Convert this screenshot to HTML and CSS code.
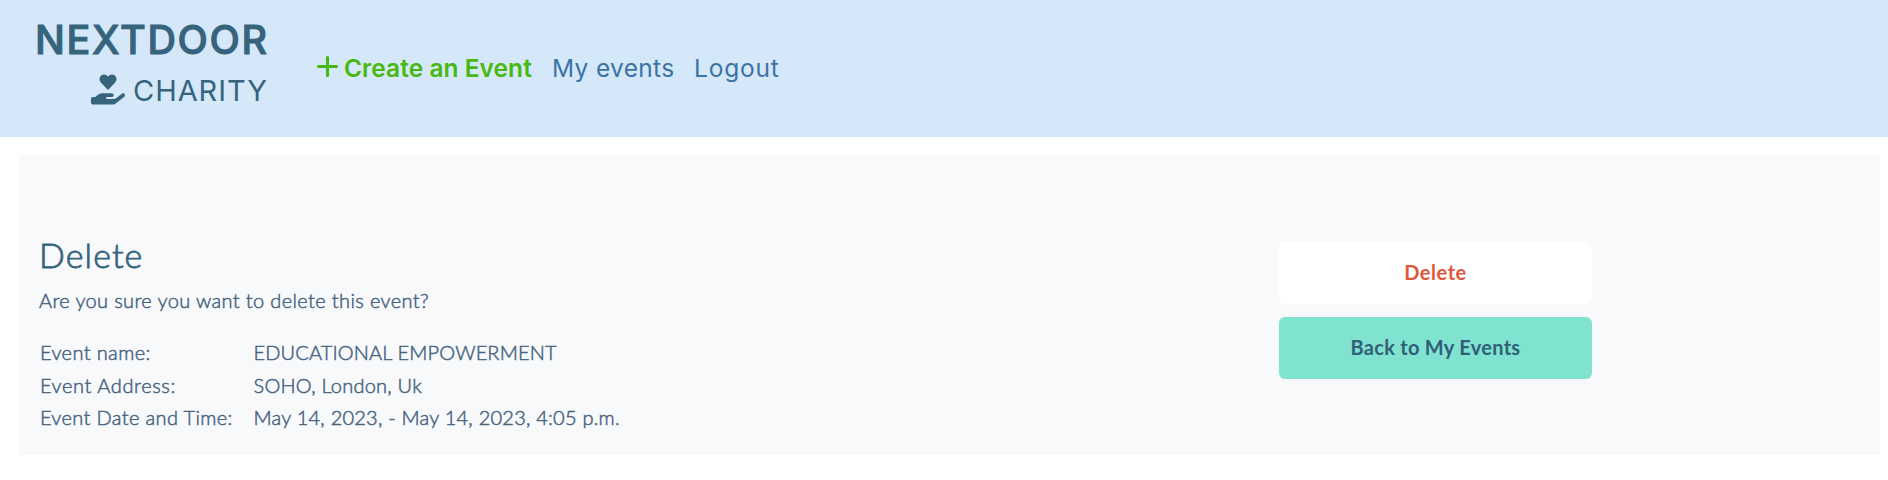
FILE: index.html
```html
<!DOCTYPE html>
<html lang="en">
<head>
<meta charset="utf-8">
<title>Nextdoor Charity</title>
<link rel="stylesheet" href="styles.css">
</head>
<body>
<header class="header">
  <a class="brand">
    <span class="brand-name">NEXTDOOR</span>
    <span class="brand-sub">
      <svg class="brand-icon" viewBox="0 0 576 512"><path d="M275.200 250.500c7 7.400 18.400 7.400 25.500 0l108.900-114.200c31.600-33.200 29.800-88.200-5.600-118.800-30.800-26.700-76.700-21.900-104.900 7.700L288 36.900l-11.100-11.600C248.700-4.400 202.800-9.200 172 17.500c-35.300 30.600-37.200 85.600-5.600 118.800l108.800 114.200z"/><path d="M565.200 328.100c-11.800-10.700-30.200-10-42.600 0L430.300 402c-11.300 9.100-25.400 14-40 14H272c-8.800 0-16-7.200-16-16s7.200-16 16-16h78.300c15.900 0 30.700-10.900 33.300-26.600 3.300-20-12.100-37.400-31.600-37.400H192c-27 0-53.100 9.300-74.100 26.300L71.400 384H32c-18 0-32 14-32 32v64c0 18 14 32 32 32h340.800c14.500 0 28.600-4.900 40-14L564 377c15.200-12.100 16.400-35.300 1.200-48.900z"/></svg>
      <span class="brand-charity">CHARITY</span>
    </span>
  </a>
  <nav class="nav">
    <a class="nav-create"><svg class="plus" viewBox="0 0 20 20"><path d="M10 1.500V18.500M1.500 10H18.500"/></svg><span>Create an Event</span></a>
    <a class="nav-events">My events</a>
    <a class="nav-logout">Logout</a>
  </nav>
</header>
<main class="panel">
  <section class="details">
    <h1 class="title">Delete</h1>
    <p class="question">Are you sure you want to delete this event?</p>
    <div class="facts">
      <span class="l1">Event name:</span><span class="v1">EDUCATIONAL EMPOWERMENT</span>
      <span class="l2">Event Address:</span><span class="v2">SOHO, London, Uk</span>
      <span class="l3">Event Date and Time:</span><span class="v3">May 14, 2023, - May 14, 2023, 4:05 p.m.</span>
    </div>
  </section>
  <section class="actions">
    <button class="btn btn-delete">Delete</button>
    <button class="btn btn-back">Back to My Events</button>
  </section>
</main>
</body>
</html>
```
FILE: styles.css
```css
* { box-sizing: border-box; }
body { margin: 0; background: #fff; color: #476482; font-family: Lato, sans-serif; }
.header { display: flex; height: 137px; background: #d5e8f9; padding-left: 35px; }
.brand { width: 233px; padding-top: 15px; color: #36647c; display: flex; flex-direction: column; }
.brand-name { font: 500 39.5px/50px Inter, sans-serif; letter-spacing: 1.7px; white-space: nowrap; -webkit-text-stroke: 1px #36647c; stroke-linejoin: round; }
.brand-sub { display: flex; padding-left: 56px; padding-top: 9px; }
.brand-icon { width: 34px; height: 31px; fill: #36647c; }
.brand-charity { font: 400 29px/34px Inter, sans-serif; letter-spacing: 0.95px; margin-left: 8px; }
.nav { display: flex; padding-top: 51px; font: 400 24.5px/34px Inter, sans-serif; color: #3c73a5; white-space: nowrap; }
.nav-create { display: flex; width: 235px; margin-left: 49px; color: #47b811; font-weight: 600; letter-spacing: 0.04px; }
.plus { width: 21px; height: 21px; margin: 5px 6px 0 0; fill: none; stroke: #47b811; stroke-width: 3; stroke-linecap: round; }
.nav-events { width: 142px; letter-spacing: 0.33px; }
.nav-logout { letter-spacing: 0.8px; }
.panel { display: flex; justify-content: space-between; margin: 18px 8px 0 19px; height: 300px; background: #f8f9fb; padding: 79px 288px 0 20px; }
.title { margin: 0; font: 300 34px/42px Lato, sans-serif; letter-spacing: 1.1px; color: #36647c; -webkit-text-stroke: 0.8px #36647c; }
.question { margin: 12px 0 0; font-size: 20px; line-height: 24px; letter-spacing: 0.37px; }
.question, .facts { font-weight: 300; -webkit-text-stroke: 0.5px #476482; }
.facts { display: grid; grid-template-columns: 213.5px auto; grid-auto-rows: 32.5px; margin: 24px 0 0 1px; font-size: 20px; line-height: 32px; white-space: nowrap; }
.l1 { letter-spacing: 0.39px; }
.l2 { letter-spacing: 0.6px; }
.l3 { letter-spacing: 0.36px; }
.v1 { letter-spacing: 0.14px; }
.v2 { letter-spacing: 0.23px; }
.v3 { letter-spacing: 0.23px; }
.actions { display: flex; flex-direction: column; gap: 13px; width: 313px; padding-top: 8px; }
.btn { height: 62px; border: 0; border-radius: 6px; padding: 0 0 2px; font: 700 20px/24px Lato, sans-serif; }
.btn-delete { background: #fff; color: #e0583c; letter-spacing: 0.55px; }
.btn-back { background: #7fe3d0; color: #315f78; letter-spacing: 0.28px; }
```
